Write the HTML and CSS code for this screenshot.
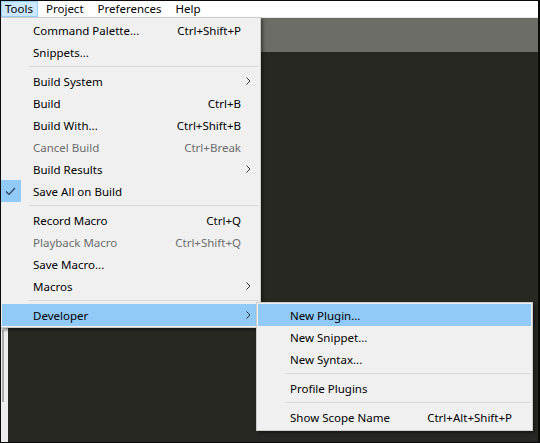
FILE: index.html
```html
<!DOCTYPE html>
<html>
<head>
<meta charset="utf-8">
<link rel="stylesheet" href="styles.css">
</head>
<body>
<div class="screen">
  <div class="menubar">
    <span class="mb-item active">Tools</span>
    <span class="mb-item">Project</span>
    <span class="mb-item">Preferences</span>
    <span class="mb-item">Help</span>
  </div>
  <div class="window">
    <div class="side"><div class="side-thumb"></div></div>
    <div class="main">
      <div class="tabbar"></div>
      <div class="editor"></div>
    </div>
  </div>

  <div class="menu main-menu">
    <div class="row"><span class="gut"></span><span class="lbl">Command Palette...</span><span class="key">Ctrl+Shift+P</span><span class="arr"></span></div>
    <div class="row"><span class="gut"></span><span class="lbl">Snippets...</span><span class="key"></span><span class="arr"></span></div>
    <div class="sep"></div>
    <div class="row"><span class="gut"></span><span class="lbl">Build System</span><span class="key"></span><span class="arr"><svg class="chev" width="5" height="8" viewBox="0 0 5 8"><path d="M0.5 0.5 L4 4 L0.5 7.5" fill="none" stroke="#333" stroke-width="1"/></svg></span></div>
    <div class="row"><span class="gut"></span><span class="lbl">Build</span><span class="key">Ctrl+B</span><span class="arr"></span></div>
    <div class="row"><span class="gut"></span><span class="lbl">Build With...</span><span class="key">Ctrl+Shift+B</span><span class="arr"></span></div>
    <div class="row disabled"><span class="gut"></span><span class="lbl">Cancel Build</span><span class="key">Ctrl+Break</span><span class="arr"></span></div>
    <div class="row"><span class="gut"></span><span class="lbl">Build Results</span><span class="key"></span><span class="arr"><svg class="chev" width="5" height="8" viewBox="0 0 5 8"><path d="M0.5 0.5 L4 4 L0.5 7.5" fill="none" stroke="#333" stroke-width="1"/></svg></span></div>
    <div class="row"><span class="gut"><span class="checkbox"><svg width="11" height="9" viewBox="0 0 11 9"><path d="M1 4.5 L4 7.5 L10 1" fill="none" stroke="#2a3f5a" stroke-width="1.2"/></svg></span></span><span class="lbl">Save All on Build</span><span class="key"></span><span class="arr"></span></div>
    <div class="sep"></div>
    <div class="row"><span class="gut"></span><span class="lbl">Record Macro</span><span class="key">Ctrl+Q</span><span class="arr"></span></div>
    <div class="row disabled"><span class="gut"></span><span class="lbl">Playback Macro</span><span class="key">Ctrl+Shift+Q</span><span class="arr"></span></div>
    <div class="row"><span class="gut"></span><span class="lbl">Save Macro...</span><span class="key"></span><span class="arr"></span></div>
    <div class="row"><span class="gut"></span><span class="lbl">Macros</span><span class="key"></span><span class="arr"><svg class="chev" width="5" height="8" viewBox="0 0 5 8"><path d="M0.5 0.5 L4 4 L0.5 7.5" fill="none" stroke="#333" stroke-width="1"/></svg></span></div>
    <div class="sep"></div>
    <div class="row hot"><span class="gut"></span><span class="lbl">Developer</span><span class="key"></span><span class="arr"><svg class="chev" width="5" height="8" viewBox="0 0 5 8"><path d="M0.5 0.5 L4 4 L0.5 7.5" fill="none" stroke="#333" stroke-width="1"/></svg></span></div>
  </div>

  <div class="menu sub-menu">
    <div class="row hot"><span class="gut"></span><span class="lbl">New Plugin...</span><span class="key"></span><span class="arr"></span></div>
    <div class="row"><span class="gut"></span><span class="lbl">New Snippet...</span><span class="key"></span><span class="arr"></span></div>
    <div class="row"><span class="gut"></span><span class="lbl">New Syntax...</span><span class="key"></span><span class="arr"></span></div>
    <div class="sep"></div>
    <div class="row"><span class="gut"></span><span class="lbl">Profile Plugins</span><span class="key"></span><span class="arr"></span></div>
    <div class="sep"></div>
    <div class="row"><span class="gut"></span><span class="lbl">Show Scope Name</span><span class="key">Ctrl+Alt+Shift+P</span><span class="arr"></span></div>
  </div>
</div>
</body>
</html>
```

FILE: styles.css
```css
* { box-sizing: border-box; }

html, body {
  margin: 0;
  padding: 0;
  background: #000;
}

body {
  font-family: "Segoe UI", "Noto Sans", "Liberation Sans", sans-serif;
  font-size: 11.5px;
  color: #000;
}

.screen {
  position: relative;
  width: 540px;
  height: 443px;
  border-style: solid;
  border-color: #0a0a0a;
  border-width: 1px 2px 1px 1px;
  display: flex;
  flex-direction: column;
  overflow: hidden;
  background: #272822;
}

.menubar {
  height: 16px;
  background: #fff;
  display: flex;
  align-items: stretch;
  flex: none;
}

.mb-item {
  display: flex;
  align-items: center;
  padding: 0 6px;
  line-height: 1;
  border: 1px solid transparent;
}

.mb-item.active {
  background: #cce8ff;
  border-color: #99d1ff;
  padding: 0 4px 0 3px;
  margin-right: 1px;
}

.window {
  flex: 1;
  display: flex;
}

.side {
  width: 7px;
  background: #ececec;
  flex: none;
}

.side-thumb {
  margin-top: 313px;
  margin-left: 1px;
  width: 2px;
  height: 72px;
  background: #a9a9a9;
}

.main {
  flex: 1;
  display: flex;
  flex-direction: column;
}

.tabbar {
  height: 35px;
  background: #6c6d67;
  border-top: 1px solid #e6e6e6;
  flex: none;
}

.editor {
  flex: 1;
  background: #272822;
}

.menu {
  position: absolute;
  background: #f0f0f0;
  border: 1px solid #cccccc;
  padding: 1px;
  box-shadow: 2px 2px 3px rgba(0, 0, 0, 0.45);
}

.main-menu {
  left: -1px;
  top: 16px;
  width: 261px;
}

.sub-menu {
  left: 255px;
  top: 301px;
  width: 277px;
  padding-bottom: 2px;
}

.row {
  height: 22px;
  display: grid;
  grid-template-columns: 31px 1fr auto 18px;
  align-items: center;
  white-space: nowrap;
}

.sub-menu .row {
  grid-template-columns: 32px 1fr auto 19px;
}

.row.hot {
  background: #91c9f7;
}

.row.disabled {
  color: #6d6d6d;
}

.gut {
  height: 100%;
  position: relative;
}

.checkbox {
  display: flex;
  align-items: center;
  justify-content: center;
  width: 21px;
  height: 22px;
  margin-left: -2px;
  background: #91c9f7;
}

.key {
  text-align: right;
}

.arr {
  display: flex;
  align-items: center;
  padding-left: 5px;
}

.sep {
  height: 7px;
  margin-left: 27px;
  display: flex;
  align-items: center;
}

.sub-menu .sep {
  margin-left: 28px;
}

.sep::after {
  content: "";
  display: block;
  height: 1px;
  width: 100%;
  background: #d7d7d7;
}
```
